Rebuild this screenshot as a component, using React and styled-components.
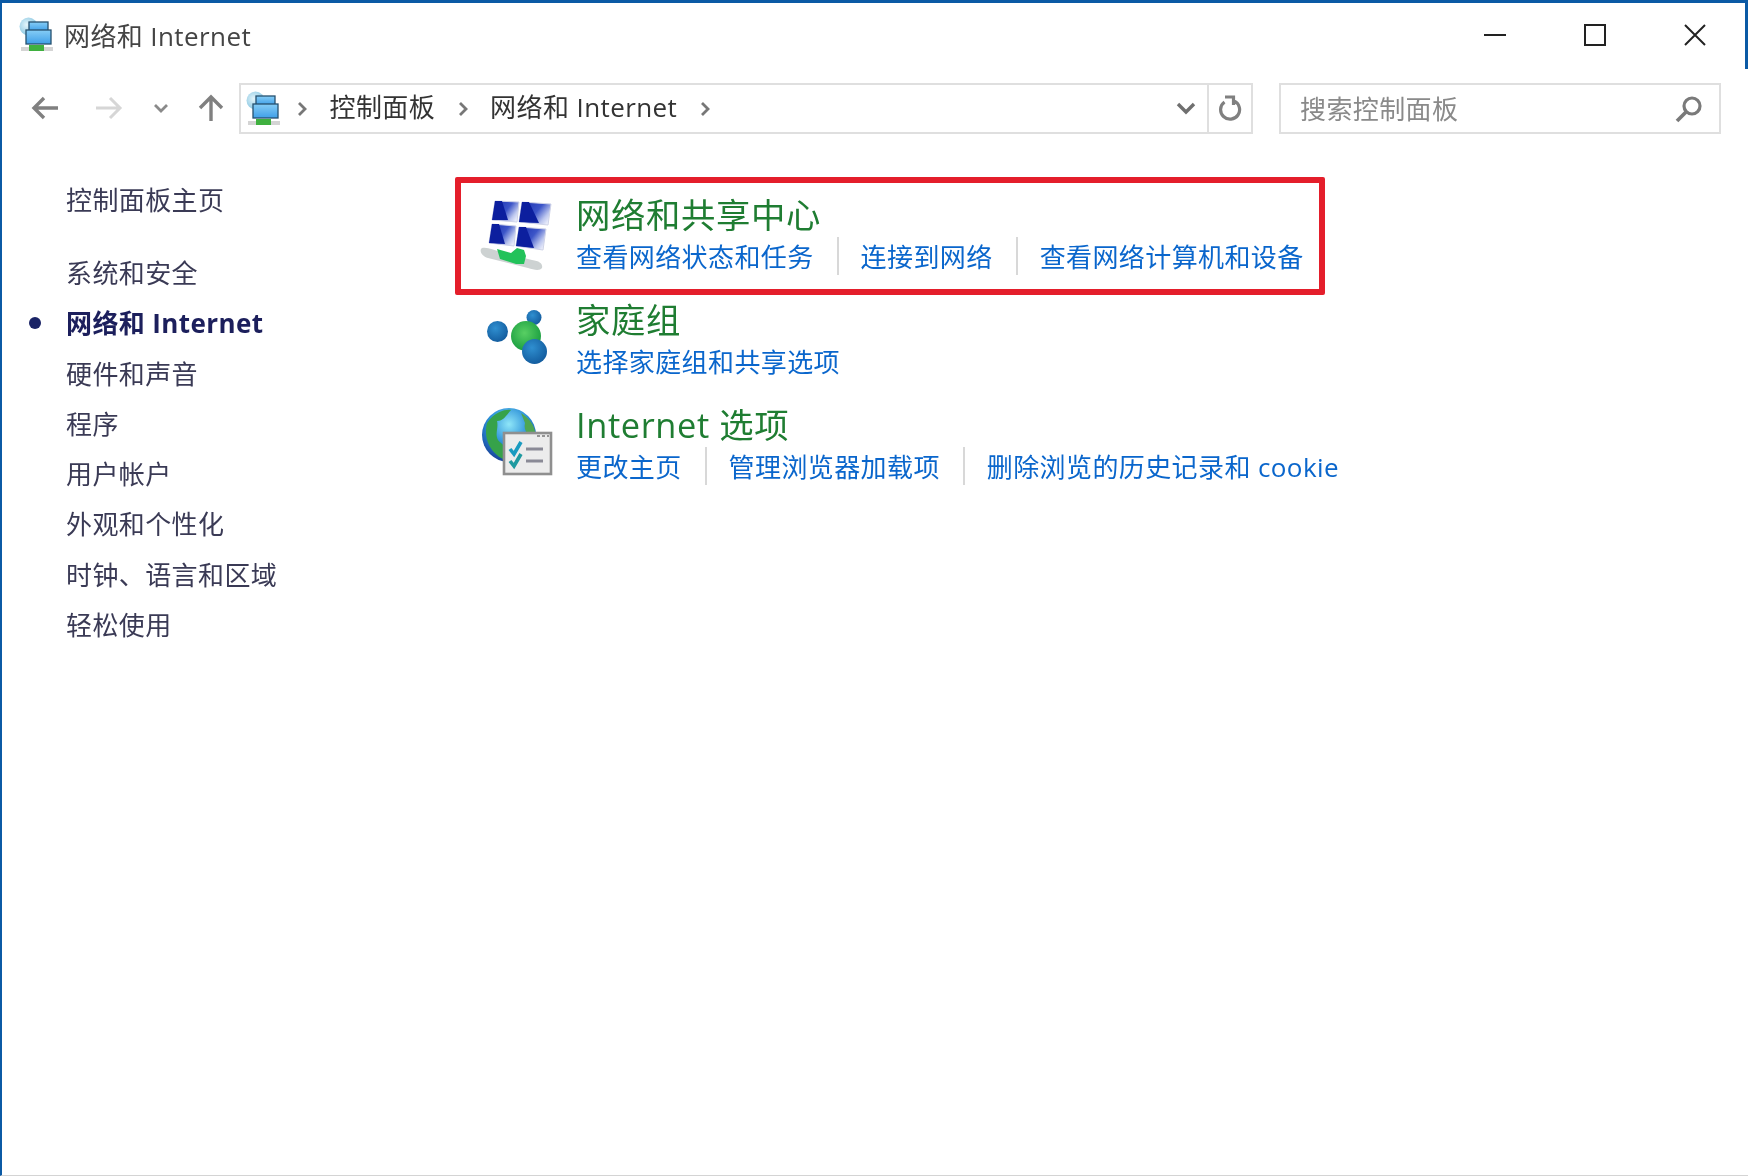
import React from 'react';
import styled, { createGlobalStyle } from 'styled-components';

const Global = createGlobalStyle`
  html, body { margin: 0; padding: 0; background: #fff; }
  * { box-sizing: border-box; }
`;

const sidebarItems = [
  { label: '系统和安全' },
  { label: '网络和 Internet', active: true },
  { label: '硬件和声音' },
  { label: '程序' },
  { label: '用户帐户' },
  { label: '外观和个性化' },
  { label: '时钟、语言和区域' },
  { label: '轻松使用' },
];

const NetworkIcon = ({ id, size }) => (
  <svg width={size} height={size} viewBox="0 0 36 36">
    <defs>
      <radialGradient id={`${id}-g`} cx="0.4" cy="0.4" r="0.7">
        <stop offset="0" stopColor="#e4f5fb" />
        <stop offset="1" stopColor="#7cc0de" />
      </radialGradient>
      <linearGradient id={`${id}-s`} x1="0" y1="0" x2="0" y2="1">
        <stop offset="0" stopColor="#86cdf6" />
        <stop offset="1" stopColor="#3f9fe8" />
      </linearGradient>
    </defs>
    <circle cx="9.5" cy="9.5" r="9" fill={`url(#${id}-g)`} />
    <rect x="10" y="5" width="19" height="9" fill={`url(#${id}-s)`} stroke="#26506f" strokeWidth="1.3" />
    <rect x="7" y="13" width="25" height="14" fill={`url(#${id}-s)`} stroke="#26506f" strokeWidth="1.3" />
    <rect x="2" y="30" width="32" height="4" fill="#d4d4d4" />
    <rect x="10" y="28" width="15" height="6" fill="#3fb03f" />
  </svg>
);

const Pane = ({ points }) => {
  const [a, , c, d] = points;
  return (
    <g>
      <polygon points={points.map((p) => p.join(',')).join(' ')} fill="url(#pane)" stroke="#cfd3e8" strokeWidth="1" />
      <polygon
        points={`${a[0]},${a[1]} ${a[0] + 7},${a[1]} ${c[0] - 9},${c[1] - 2} ${d[0]},${d[1]}`}
        fill="#0c1f9e"
      />
    </g>
  );
};

const SharingIcon = () => (
  <svg width="90" height="90" viewBox="0 0 90 90">
    <defs>
      <linearGradient id="pane" x1="0" y1="0.2" x2="1" y2="0.8">
        <stop offset="0" stopColor="#1a30b0" />
        <stop offset="0.5" stopColor="#3c55c8" />
        <stop offset="0.8" stopColor="#bcc6ee" />
        <stop offset="1" stopColor="#f2f4fd" />
      </linearGradient>
    </defs>
    <Pane points={[[25, 11], [49, 12], [47, 32], [22, 30]]} />
    <Pane points={[[52, 12], [81, 14], [78, 35], [49, 32]]} />
    <Pane points={[[22, 34], [46, 36], [44, 56], [19, 53]]} />
    <Pane points={[[49, 37], [76, 39], [73, 60], [46, 56]]} />
    <path d="M12 58 C18 57 24 60 30 62 L62 70 C70 71 73 74 72 78 C70 81 64 80 58 78 L18 68 C11 66 9 60 12 58 Z" fill="#cdd2d2" />
    <path d="M27 59 L41 63 L47 58 L54 60 L56 66 L54 74 L46 74 L30 69 Z" fill="#22c25a" />
  </svg>
);

const HomegroupIcon = () => (
  <svg width="60" height="56" viewBox="0 0 60 56">
    <defs>
      <radialGradient id="hb" cx="0.4" cy="0.35" r="0.7">
        <stop offset="0" stopColor="#2f8fd0" />
        <stop offset="1" stopColor="#125a9c" />
      </radialGradient>
      <radialGradient id="hg" cx="0.45" cy="0.4" r="0.65">
        <stop offset="0" stopColor="#58cf63" />
        <stop offset="1" stopColor="#169a3e" />
      </radialGradient>
    </defs>
    <circle cx="10.5" cy="21.5" r="10.5" fill="url(#hb)" />
    <circle cx="47" cy="7.5" r="7.5" fill="url(#hb)" />
    <circle cx="39" cy="26" r="15" fill="url(#hg)" />
    <circle cx="47.5" cy="41.5" r="12.5" fill="url(#hb)" />
  </svg>
);

const InternetIcon = () => (
  <svg width="72" height="72" viewBox="0 0 72 72">
    <defs>
      <radialGradient id="globe" cx="0.5" cy="0.3" r="0.75">
        <stop offset="0" stopColor="#8fe6f8" />
        <stop offset="0.5" stopColor="#2a8fd8" />
        <stop offset="1" stopColor="#15348f" />
      </radialGradient>
    </defs>
    <circle cx="28" cy="28" r="27" fill="url(#globe)" />
    <path d="M6 16 C14 4 26 2 30 3 C24 10 22 14 16 14 C18 22 12 30 20 36 C26 40 24 48 22 52 C10 46 2 32 6 16 Z" fill="#36a24a" />
    <path d="M40 6 C50 12 56 22 54 32 C48 30 42 24 44 16 Z" fill="#4fa652" />
    <rect x="23" y="26" width="47" height="41" fill="#ececec" stroke="#8f8f8f" strokeWidth="2.6" />
    <path d="M56 29 h3 M61 29 h3 M66 29 h2" stroke="#777" strokeWidth="1.6" />
    <path d="M29 42 L33 47 L40 35" fill="none" stroke="#1a9bc0" strokeWidth="3.6" />
    <path d="M29 54 L33 59 L40 47" fill="none" stroke="#1f9aa0" strokeWidth="3.6" />
    <path d="M45 42 H62 M45 54 H62" stroke="#8a8a96" strokeWidth="3" />
  </svg>
);

const categories = [
  { title: '网络和共享中心', icon: <SharingIcon />, x: -10, y: -4, links: ['查看网络状态和任务', '连接到网络', '查看网络计算机和设备'] },
  { title: '家庭组', icon: <HomegroupIcon />, x: 7, y: 11, links: ['选择家庭组和共享选项'] },
  { title: 'Internet 选项', icon: <InternetIcon />, x: 1, y: 3, links: ['更改主页', '管理浏览器加载项', '删除浏览的历史记录和 cookie'] },
];

export default function App() {
  return (
    <Frame>
      <Global />
      <RightEdge />
      <TitleBar>
        <TitleLeft>
          <NetworkIcon id="title" size={36} />
          <TitleText>网络和 Internet</TitleText>
        </TitleLeft>
        <WindowButtons>
          <svg width="22" height="22" viewBox="0 0 22 22"><path d="M0 11 H22" stroke="#222" strokeWidth="2" /></svg>
          <svg width="22" height="22" viewBox="0 0 22 22"><rect x="1" y="1" width="20" height="20" fill="none" stroke="#222" strokeWidth="2" /></svg>
          <svg width="22" height="22" viewBox="0 0 22 22"><path d="M1 1 L21 21 M21 1 L1 21" stroke="#222" strokeWidth="2" /></svg>
        </WindowButtons>
      </TitleBar>

      <NavBar>
        <NavButtons>
          <svg width="28" height="26" viewBox="0 0 28 26"><path d="M27 13 H3 M13 3 L3 13 L13 23" fill="none" stroke="#808080" strokeWidth="3.4" /></svg>
          <svg width="28" height="26" viewBox="0 0 28 26"><path d="M1 13 H25 M15 3 L25 13 L15 23" fill="none" stroke="#d6d6d6" strokeWidth="3" /></svg>
          <svg width="16" height="10" viewBox="0 0 16 10"><path d="M2 2 L8 8 L14 2" fill="none" stroke="#8a8a8a" strokeWidth="2.8" /></svg>
          <svg width="28" height="28" viewBox="0 0 28 28"><path d="M14 27 V3 M3 14 L14 3 L25 14" fill="none" stroke="#808080" strokeWidth="3.4" /></svg>
        </NavButtons>
        <AddressBar>
          <NetworkIcon id="addr" size={36} />
          <Crumbs>
            <Chevron />
            <Crumb>控制面板</Crumb>
            <Chevron />
            <Crumb>网络和 Internet</Crumb>
            <Chevron />
          </Crumbs>
          <AddressEnd>
            <svg width="20" height="14" viewBox="0 0 20 14"><path d="M2 2 L10 10 L18 2" fill="none" stroke="#6f6f6f" strokeWidth="3.4" /></svg>
          </AddressEnd>
          <RefreshCell>
            <svg width="24" height="28" viewBox="0 0 24 28"><path d="M6.5 7 A9.5 9.5 0 1 0 16 6 M7 2 H15.5 V10" fill="none" stroke="#808080" strokeWidth="3.2" /></svg>
          </RefreshCell>
        </AddressBar>
        <SearchBox>
          <Placeholder>搜索控制面板</Placeholder>
          <svg width="28" height="28" viewBox="0 0 28 28"><circle cx="17" cy="11" r="8" fill="none" stroke="#7a7a7a" strokeWidth="3.2" /><path d="M11 17 L2 26" stroke="#7a7a7a" strokeWidth="3.8" /></svg>
        </SearchBox>
      </NavBar>

      <Body>
        <Sidebar>
          <HomeLink>控制面板主页</HomeLink>
          {sidebarItems.map((item) => (
            <SideItem key={item.label} $active={item.active}>{item.label}</SideItem>
          ))}
        </Sidebar>
        <Main>
          <Highlight />
          {categories.map((cat) => (
            <Category key={cat.title}>
              <CategoryIcon $x={cat.x} $y={cat.y}>{cat.icon}</CategoryIcon>
              <div>
                <CategoryTitle>{cat.title}</CategoryTitle>
                <Links>
                  {cat.links.map((link) => <LinkText key={link}>{link}</LinkText>)}
                </Links>
              </div>
            </Category>
          ))}
        </Main>
      </Body>
    </Frame>
  );
}

const Chevron = () => (
  <svg width="10" height="16" viewBox="0 0 10 16"><path d="M2 2 L8 8 L2 14" fill="none" stroke="#777" strokeWidth="2.8" /></svg>
);

const Frame = styled.div`
  position: relative;
  width: 1748px;
  height: 1176px;
  overflow: hidden;
  background: #fff;
  border-top: 3px solid #0b5aa5;
  border-left: 2px solid #0b5aa5;
  border-bottom: 1px solid #d4d4d4;
  font-family: "Open Sans", "Noto Sans CJK SC", sans-serif;
  font-size: 26px;
  letter-spacing: 0.4px;
  color: #222;
  filter: blur(0.7px);
`;

const RightEdge = styled.div`
  position: absolute;
  top: 0;
  right: 0;
  width: 3px;
  height: 66px;
  background: #0b5aa5;
`;

const TitleBar = styled.div`
  height: 64px;
  display: flex;
  align-items: center;
  justify-content: space-between;
  padding: 0 42px 0 17px;
`;

const TitleLeft = styled.div`
  display: flex;
  align-items: center;
  gap: 9px;
`;

const TitleText = styled.span`
  color: #444;
`;

const WindowButtons = styled.div`
  display: flex;
  align-items: center;
  gap: 78px;
`;

const NavBar = styled.div`
  height: 51px;
  margin-top: 16px;
  display: flex;
  align-items: center;
  padding-left: 29px;
`;

const NavButtons = styled.div`
  width: 208px;
  padding-bottom: 2px;
  display: flex;
  align-items: center;
  gap: 34px;

  svg:nth-child(2) { margin-left: 2px; }
  svg:nth-child(3) { margin: 0 -4px 0 -4px; }
  svg:nth-child(4) { margin-left: -2px; }
`;

const AddressBar = styled.div`
  width: 1014px;
  height: 51px;
  border: 2px solid #dfdfdf;
  display: flex;
  align-items: center;
  padding-left: 5px;
`;

const Crumbs = styled.div`
  flex: 1;
  display: flex;
  align-items: center;
  gap: 22.5px;
  margin-left: 15px;
  color: #333;
`;

const Crumb = styled.span`
  line-height: 34px;
  padding-bottom: 3px;
`;

const AddressEnd = styled.div`
  width: 31px;
  display: flex;
`;

const RefreshCell = styled.div`
  width: 44px;
  height: 100%;
  border-left: 2px solid #dfdfdf;
  display: flex;
  align-items: center;
  justify-content: center;
`;

const SearchBox = styled.div`
  width: 442px;
  height: 51px;
  margin-left: 26px;
  border: 2px solid #dfdfdf;
  display: flex;
  align-items: center;
  justify-content: space-between;
  padding: 0 16px 0 19px;
`;

const Placeholder = styled.span`
  color: #8a8a8a;
  padding-bottom: 1px;
`;

const Body = styled.div`
  display: flex;
  padding-top: 41px;
`;

const Sidebar = styled.nav`
  width: 453px;
  padding-left: 64px;
  display: flex;
  flex-direction: column;
`;

const HomeLink = styled.div`
  height: 50px;
  line-height: 50px;
  margin-bottom: 23px;
  color: #3a3a55;
`;

const SideItem = styled.div`
  position: relative;
  height: 50.3px;
  line-height: 50px;
  color: ${(p) => (p.$active ? '#1c1f5c' : '#3a3a55')};
  font-weight: ${(p) => (p.$active ? 700 : 400)};

  ${(p) => p.$active && `
    &::before {
      content: '';
      position: absolute;
      left: -37px;
      top: 19px;
      width: 12px;
      height: 12px;
      border-radius: 50%;
      background: #1a2366;
    }
  `}
`;

const Main = styled.main`
  position: relative;
  flex: 1;
  display: flex;
  flex-direction: column;
  gap: 21px;
  padding-top: 19px;
`;

const Highlight = styled.div`
  position: absolute;
  left: 0;
  top: 2px;
  width: 870px;
  height: 118px;
  border: 6px solid #e41e2b;
  border-radius: 2px;
`;

const Category = styled.section`
  display: flex;
  align-items: flex-start;
  padding-left: 25px;
`;

const CategoryIcon = styled.div`
  flex: 0 0 96px;
  height: 84px;
  display: flex;
  align-items: flex-start;

  svg {
    flex: none;
    margin: ${(p) => p.$y}px 0 0 ${(p) => p.$x}px;
  }
`;

const CategoryTitle = styled.div`
  height: 42px;
  line-height: 42px;
  font-size: 34.4px;
  letter-spacing: 0.6px;
  color: #1f7d32;
`;

const Links = styled.div`
  display: flex;
  height: 42px;
  margin-top: -1px;
  align-items: center;
`;

const LinkText = styled.span`
  color: #0a66cc;

  & + & {
    margin-left: 23px;
    padding-left: 22px;
    border-left: 2px solid #d8d8d8;
  }
`;
